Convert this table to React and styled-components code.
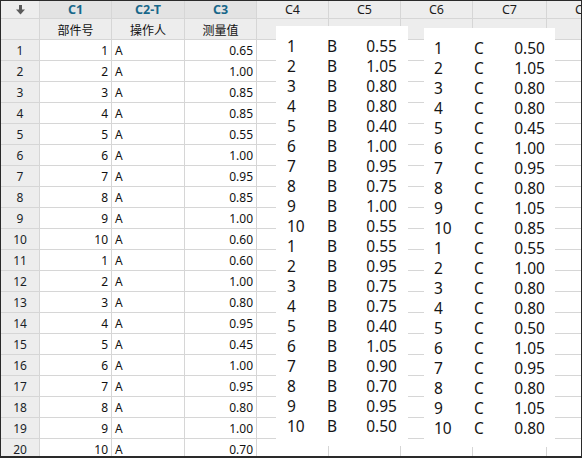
import React from 'react'
import styled, { createGlobalStyle } from 'styled-components'

const Global = createGlobalStyle`
  html, body {
    margin: 0;
    padding: 0;
    background: #ffffff;
  }
  body {
    font-family: "Noto Sans", "Noto Sans CJK SC", sans-serif;
  }
`

const COLS = '39px 72px 73px 72px 72px 72px 72px 74px 72px'

const Sheet = styled.div`
  position: relative;
  width: 582px;
  height: 458px;
  box-sizing: border-box;
  border: 1px solid #2a2a2a;
  border-bottom-width: 2px;
  overflow: hidden;
  background: #ffffff;
`

const Row = styled.div`
  display: grid;
  grid-template-columns: ${COLS};
  height: ${(p) => p.$h}px;
`

const Cell = styled.div`
  box-sizing: border-box;
  border-right: 1px solid #d6d6d6;
  border-bottom: 1px solid #d6d6d6;
  background: ${(p) => p.$bg || '#ffffff'};
  display: flex;
  align-items: center;
  justify-content: ${(p) => p.$align || 'flex-start'};
  padding: 0 3px;
  font-size: 12px;
  color: #111;
  white-space: nowrap;
  overflow: hidden;
`

const ColName = styled(Cell)`
  font-weight: ${(p) => (p.$used ? 700 : 400)};
  color: ${(p) => (p.$used ? '#17678a' : '#1c1c1c')};
  font-size: 12.5px;
`

const Label = styled(Cell)`
  font-family: "Noto Sans CJK SC", "Noto Sans", sans-serif;
  font-size: 12px;
  color: #111;
`

const RowNo = styled(Cell)`
  color: #1a1f28;
`

const Pasted = styled.div`
  position: absolute;
  left: ${(p) => p.$x}px;
  top: ${(p) => p.$y}px;
  width: ${(p) => p.$w}px;
  height: ${(p) => p.$h}px;
  background: #ffffff;
  box-sizing: border-box;
  padding: 10px ${(p) => p.$pr}px 0 ${(p) => p.$pl}px;
  display: grid;
  grid-template-columns: 40px 30px 1fr;
  grid-auto-rows: 20px;
  align-content: start;
  font-family: "Noto Sans", "Open Sans", sans-serif;
  font-size: 15.5px;
  color: #151515;
`

const PItem = styled.span`
  display: flex;
  align-items: center;
  justify-content: ${(p) => (p.$right ? 'flex-end' : 'flex-start')};
  line-height: 20px;
`

const c3 = ['0.65', '1.00', '0.85', '0.85', '0.55', '1.00', '0.95', '0.85', '1.00', '0.60', '0.60', '1.00', '0.80', '0.95', '0.45', '1.00', '0.95', '0.80', '1.00', '0.70']
const bVals = ['0.55', '1.05', '0.80', '0.80', '0.40', '1.00', '0.95', '0.75', '1.00', '0.55', '0.55', '0.95', '0.75', '0.75', '0.40', '1.05', '0.90', '0.70', '0.95', '0.50']
const cVals = ['0.50', '1.05', '0.80', '0.80', '0.45', '1.00', '0.95', '0.80', '1.05', '0.85', '0.55', '1.00', '0.80', '0.80', '0.50', '1.05', '0.95', '0.80', '1.05', '0.80']

const HEAD = '#ededed'
const HEAD_USED = '#e3e3e3'

function DownArrow() {
  return (
    <svg width="9" height="10" viewBox="0 0 9 10">
      <rect x="3" y="0" width="3" height="5" fill="#5a5a5a" />
      <path d="M0 4.5 H9 L4.5 9.5 Z" fill="#5a5a5a" />
    </svg>
  )
}

function PastedBlock({ letter, vals, ...rest }) {
  return (
    <Pasted {...rest}>
      {vals.map((v, i) => (
        <React.Fragment key={i}>
          <PItem>{(i % 10) + 1}</PItem>
          <PItem>{letter}</PItem>
          <PItem $right>{v}</PItem>
        </React.Fragment>
      ))}
    </Pasted>
  )
}

export default function App() {
  const empty = ['C4', 'C5', 'C6', 'C7', 'C8']
  return (
    <>
      <Global />
      <Sheet>
        <Row $h={18}>
          <Cell $bg={HEAD} $align="center"><DownArrow /></Cell>
          <ColName $bg={HEAD_USED} $align="center" $used>C1</ColName>
          <ColName $bg={HEAD_USED} $align="center" $used>C2-T</ColName>
          <ColName $bg={HEAD_USED} $align="center" $used>C3</ColName>
          {empty.map((c) => (
            <ColName key={c} $bg={HEAD} $align="center">{c}</ColName>
          ))}
        </Row>
        <Row $h={21}>
          <Cell $bg={HEAD} />
          <Label $bg={HEAD} $align="center">部件号</Label>
          <Label $bg={HEAD} $align="center">操作人</Label>
          <Label $bg={HEAD} $align="center">测量值</Label>
          {empty.map((c) => (
            <Cell key={c} $bg={HEAD} />
          ))}
        </Row>
        {c3.map((v, i) => (
          <Row key={i} $h={21}>
            <RowNo $bg={HEAD} $align="center">{i + 1}</RowNo>
            <Cell $align="flex-end">{(i % 10) + 1}</Cell>
            <Cell>A</Cell>
            <Cell $align="flex-end">{v}</Cell>
            {empty.map((c) => (
              <Cell key={c} />
            ))}
          </Row>
        ))}
        <PastedBlock letter="B" vals={bVals} $x={275} $y={25} $w={132} $h={420} $pl={11} $pr={11} />
        <PastedBlock letter="C" vals={cVals} $x={423} $y={27} $w={131} $h={419} $pl={10} $pr={10} />
      </Sheet>
    </>
  )
}
